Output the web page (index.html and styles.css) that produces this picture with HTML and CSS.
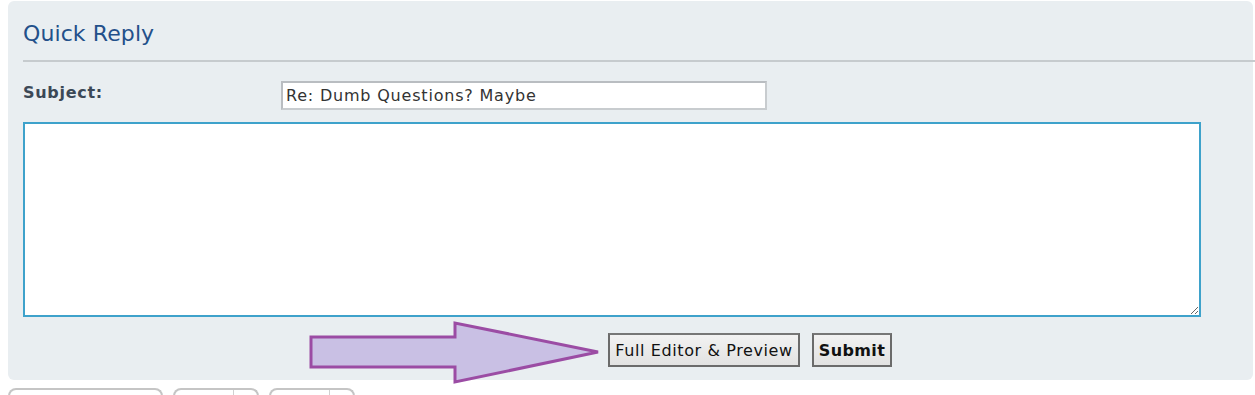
FILE: index.html
```html
<!DOCTYPE html>
<html>
<head>
<meta charset="utf-8">
<link rel="stylesheet" href="styles.css">
</head>
<body>
<div class="page">
  <div class="panel">
    <div class="panel-head"><h2 class="title">Quick Reply</h2></div>
    <div class="subject-row">
      <label class="subject-label">Subject:</label>
      <input class="subject-input" type="text" value="Re: Dumb Questions? Maybe">
    </div>
    <textarea class="message"></textarea>
    <div class="actions">
      <button class="btn btn-full">Full Editor &amp; Preview</button>
      <button class="btn btn-bold">Submit</button>
    </div>
    <svg class="arrow" width="300" height="64" viewBox="0 0 300 64">
      <polygon points="3,16 147,16 147,2 290,31 147,61 147,46 3,46" fill="#c9c0e4" stroke="#9b4ca4" stroke-width="3" stroke-linejoin="miter"/>
    </svg>
  </div>
  <div class="tabs">
    <div class="tab tab-wide"></div>
    <div class="tab tab-split"><span class="seg"></span><span class="seg-s"></span></div>
    <div class="tab tab-split"><span class="seg"></span><span class="seg-s"></span></div>
  </div>
</div>
</body>
</html>
```
FILE: styles.css
```css
html, body {
  margin: 0;
  padding: 0;
  background: #ffffff;
  font-family: "DejaVu Sans", Verdana, sans-serif;
}
.page {
  padding: 1px 2px 0 8px;
}
.panel {
  position: relative;
  background: #e9eef1;
  border-radius: 6px;
  height: 379px;
  box-sizing: border-box;
  padding: 1px 0 0 15px;
}
.panel-head {
  border-bottom: 2px solid #c6cbce;
  height: 60px;
  box-sizing: border-box;
  margin-right: -2px;
}
.title {
  margin: 0;
  padding-top: 18px;
  font-size: 22px;
  font-weight: normal;
  color: #23508a;
  line-height: 28px;
  letter-spacing: 0.1px;
}
.subject-row {
  display: flex;
  align-items: flex-start;
  padding-top: 19px;
  height: 60px;
  box-sizing: border-box;
}
.subject-label {
  width: 258px;
  font-size: 16px;
  font-weight: bold;
  color: #3b4856;
  line-height: 20px;
  padding-top: 2px;
  letter-spacing: 0.7px;
}
.subject-input {
  width: 486px;
  height: 29px;
  box-sizing: border-box;
  border: 2px solid #b9bdc1;
  border-right-color: #c8cccf;
  border-bottom-color: #c8cccf;
  background: #fff;
  font-family: "DejaVu Sans", Verdana, sans-serif;
  font-size: 16px;
  letter-spacing: 0.8px;
  color: #333;
  padding: 0 3px;
  margin: 0;
  outline: none;
}
.message {
  display: block;
  width: 1178px;
  height: 195px;
  box-sizing: border-box;
  border: 2px solid #3ea2cb;
  background: #fff;
  margin: 0;
  padding: 2px;
  resize: both;
  outline: none;
}
.actions {
  display: flex;
  gap: 12px;
  padding-left: 585px;
  padding-top: 16px;
}
.btn {
  height: 34px;
  box-sizing: border-box;
  border: 2px solid #6b6b6b;
  border-top-color: #777;
  background: linear-gradient(#f2f2f2, #e2e2e2);
  font-family: "DejaVu Sans", Verdana, sans-serif;
  font-size: 16px;
  letter-spacing: 0.6px;
  color: #111;
  padding: 0;
  margin: 0;
  border-radius: 0;
}
.btn-full { width: 192px; }
.btn-bold {
  font-weight: bold;
  width: 80px;
  letter-spacing: 0.4px;
}
.arrow {
  position: absolute;
  left: 300px;
  top: 320px;
}
.tabs {
  display: flex;
  gap: 10px;
  padding-top: 8px;
}
.tab {
  height: 12px;
  border: 2px solid #c5c5c5;
  border-bottom: none;
  border-radius: 8px 8px 0 0;
  background: #fff;
  box-sizing: border-box;
}
.tab-wide { width: 155px; }
.tab-split {
  width: 86px;
  display: flex;
}
.seg {
  width: 58px;
  border-right: 1px solid #d0d0d0;
}
```
